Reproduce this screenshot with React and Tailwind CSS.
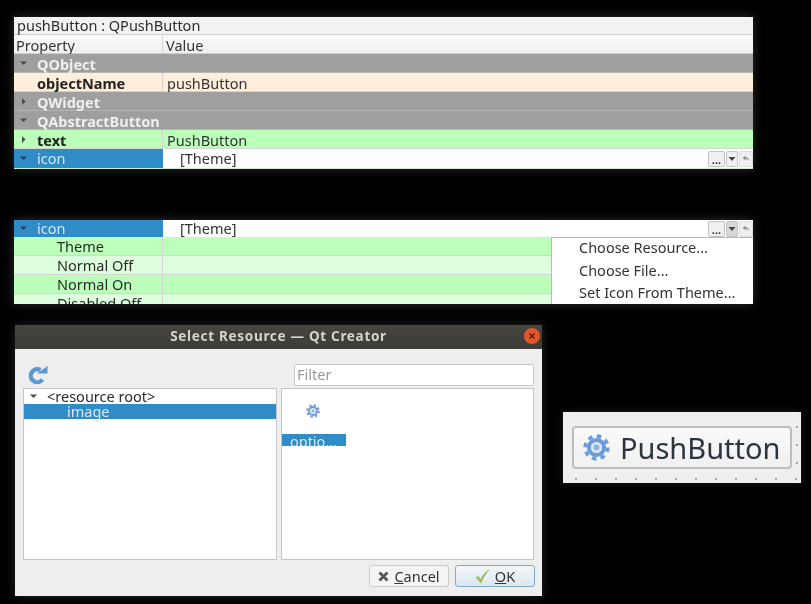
const font = 'font-["Noto_Sans",sans-serif]';

function Caret({ open, light }) {
  return (
    <svg width="9" height="9" viewBox="0 0 9 9" className="shrink-0">
      {open ? (
        <path d="M1 2.500h7L4.500 6z" fill={light ? '#1f3f5c' : '#4a4a4a'} />
      ) : (
        <path d="M3 1v7L6.500 4.500z" fill="#4a4a4a" />
      )}
    </svg>
  );
}

function Gear({ size }) {
  return (
    <svg width={size} height={size} viewBox="0 0 24 24">
      <circle cx="12" cy="12" r="10" fill="none" stroke="#6b9bd8" strokeWidth="3.400" strokeDasharray="3.930 3.930" />
      <circle cx="12" cy="12" r="6.700" fill="none" stroke="#6b9bd8" strokeWidth="3.600" />
      <circle cx="12" cy="12" r="4.800" fill="#dbe6f4" />
      <circle cx="12" cy="12" r="2.600" fill="#8fb3e0" />
    </svg>
  );
}

function Section({ name, open }) {
  return (
    <div className="h-[19px] flex items-center bg-[#9f9f9f] border-b border-[#b5b5b5] pl-[5px] shrink-0">
      <Caret open={open} />
      <span className="ml-[9px] pt-[2px] text-[14.500px] font-bold text-[#efefef] leading-none">{name}</span>
    </div>
  );
}

function Row({ name, bold, caret, bg, value }) {
  return (
    <div className={`h-[19px] flex shrink-0 border-b border-[#d4d4d4] ${bg}`}>
      <div className="w-[149px] shrink-0 flex items-center pl-[5px] border-r border-[#d4d4d4]">
        <span className="w-[9px] shrink-0">{caret && <Caret />}</span>
        <span className={`ml-[9px] pt-[2px] text-[14.500px] leading-none text-[#222] ${bold ? 'font-bold' : ''}`}>{name}</span>
      </div>
      <div className="flex-1 flex items-center pl-[4px] pt-[2px] text-[14.500px] leading-none text-[#333]">{value}</div>
    </div>
  );
}

function IconRow({ pressed, tall }) {
  return (
    <div className={`flex shrink-0 bg-white ${tall ? 'h-[19px]' : 'h-[17px]'}`}>
      <div className="w-[149px] shrink-0 flex items-center pl-[5px] bg-[#308cc6]">
        <Caret open light />
        <span className="ml-[9px] text-[14.500px] leading-none text-[#d6e8f4]">icon</span>
      </div>
      <div className={`flex-1 flex items-center pl-[17px] text-[14.500px] leading-none text-[#333] ${tall ? '' : 'pb-px'}`}>[Theme]</div>
      <div className="flex items-center gap-px">
        <div className="w-[17px] h-[16px] border border-[#c4c4c4] rounded-[2px] bg-[#f0f0f0] flex items-end justify-center text-[11px] font-bold leading-[13px] text-[#333]">...</div>
        <div className={`w-[12px] h-[16px] border border-[#c4c4c4] rounded-[2px] flex items-center justify-center ${pressed ? 'bg-[#d8d8d8]' : 'bg-[#f0f0f0]'}`}>
          <svg width="8" height="6" viewBox="0 0 8 6"><path d="M0.500 1h7L4 5z" fill="#444" /></svg>
        </div>
        <div className="w-[14px] h-[16px] border border-[#dedede] rounded-[2px] bg-[#f0f0f0] flex items-center justify-center">
          <svg width="8" height="7" viewBox="0 0 8 7"><path d="M3.500 0.500L0.500 3l3 2.500V4c1.500 0 2.600.4 3.600 2C7 3.600 5.500 2 3.500 2z" fill="#999" /></svg>
        </div>
      </div>
    </div>
  );
}

function Panel1() {
  return (
    <div className="absolute left-[14px] top-[17px] w-[739px] h-[152px] flex flex-col bg-white overflow-hidden shadow-[0_0_10px_rgba(255,255,255,0.18)]">
      <div className="h-[18px] shrink-0 flex items-center pl-[3px] bg-[#f2f2f2] border-b border-[#d0d0d0] text-[14.500px] leading-none text-[#2c2c2c]">pushButton : QPushButton</div>
      <div className="h-[19px] shrink-0 flex items-center bg-gradient-to-b from-[#fafafa] to-[#efefef] border-b border-[#cfcfcf] text-[14.500px] leading-none text-[#333]">
        <div className="w-[149px] h-full flex items-center pl-[2px] pt-[2px] border-r border-[#d8d8d8]">Property</div>
        <div className="pl-[3px] pt-[2px]">Value</div>
      </div>
      <Section name="QObject" open />
      <Row name="objectName" bold bg="bg-[#ffeedb]" value="pushButton" />
      <Section name="QWidget" />
      <Section name="QAbstractButton" open />
      <Row name="text" bold caret bg="bg-[#bbffbb]" value="PushButton" />
      <IconRow tall />
      <div className="h-px shrink-0 bg-[#cfe8cf]" />
    </div>
  );
}

function SubRow({ name, bg }) {
  return (
    <div className={`h-[19px] flex shrink-0 border-b border-[#d4d4d4] ${bg}`}>
      <div className="w-[149px] shrink-0 flex items-center pl-[43px] pt-px border-r border-[#d4d4d4] text-[14.500px] leading-none text-[#2a2a2a]">{name}</div>
    </div>
  );
}

function Panel2() {
  return (
    <div className="absolute left-[14px] top-[220px] w-[739px] h-[84px] flex flex-col bg-white overflow-hidden shadow-[0_0_10px_rgba(255,255,255,0.18)]">
      <IconRow pressed />
      <SubRow name="Theme" bg="bg-[#bbffbb]" />
      <SubRow name="Normal Off" bg="bg-[#ddffdd]" />
      <SubRow name="Normal On" bg="bg-[#bbffbb]" />
      <SubRow name="Disabled Off" bg="bg-[#ddffdd]" />
      {/* Menu */}
      <div className="absolute left-[537px] top-[17px] w-[202px] h-[67px] bg-white border-l border-t border-[#b8b8b8] overflow-hidden pl-[27px] text-[14.500px] leading-[22.500px] text-[#333]">
        <div className="-mt-[2px]">Choose Resource...</div>
        <div>Choose File...</div>
        <div>Set Icon From Theme...</div>
      </div>
    </div>
  );
}

function Dialog() {
  return (
    <div className="absolute left-[15px] top-[325px] w-[527px] h-[271px] flex flex-col bg-[#eeeeee] overflow-hidden shadow-[0_0_10px_rgba(255,255,255,0.14)]">
      {/* Title bar */}
      <div className="h-[24px] shrink-0 flex items-center justify-center relative bg-gradient-to-b from-[#48453e] to-[#3c3b37] text-[13.500px] font-bold tracking-[0.7px] text-[#d6d3cb] leading-none">
        Select Resource — Qt Creator
        <div className="absolute right-[2px] top-[3px] w-[16px] h-[16px] rounded-full bg-[#e2562a] flex items-center justify-center">
          <svg width="8" height="8" viewBox="0 0 8 8"><path d="M1.500 1.500l5 5M6.500 1.500l-5 5" stroke="#5b2413" strokeWidth="1.500" /></svg>
        </div>
      </div>
      <div className="flex-1 flex flex-col pl-[8px] pr-[8px] pt-[13px] min-h-0">
        {/* Tool row */}
        <div className="h-[26px] shrink-0 flex items-center">
          <div className="w-[271px] pl-[4px] shrink-0">
            <svg width="21" height="21" viewBox="0 0 21 21">
              <path d="M15.500 14.500A6.500 6.500 0 1 1 13.500 5" fill="none" stroke="#5f97d2" strokeWidth="4.400" />
              <path d="M10 8.500h10.500V1z" fill="#5f97d2" />
            </svg>
          </div>
          <div className="w-[240px] h-[22px] bg-white border border-[#c8c8c8] rounded-[2px] flex items-center pl-[2px] pb-[2px] text-[14.500px] leading-none text-[#9a9a9a]">Filter</div>
        </div>
        {/* Panes */}
        <div className="flex gap-[4px] h-[172px] shrink-0">
          <div className="w-[254px] bg-white border border-[#c6c6c6] flex flex-col">
            <div className="h-[15px] flex items-center pl-[5px]">
              <Caret open />
              <span className="ml-[9px] text-[14.500px] leading-none text-[#2a2a2a]">&lt;resource root&gt;</span>
            </div>
            <div className="h-[15px] flex items-center pl-[43px] bg-[#308cc6] text-[14.500px] leading-none text-[#d6e8f4]">image</div>
          </div>
          <div className="w-[254px] bg-white border border-[#c6c6c6] flex flex-col">
            <div className="pl-[24px] pt-[15px]"><Gear size={14} /></div>
            <div className="mt-[16px] w-[64px] h-[12px] bg-[#308cc6] text-[14.500px] leading-[14px] text-[#d6e8f4] text-center overflow-hidden">optio...</div>
          </div>
        </div>
        {/* Buttons */}
        <div className="flex justify-end gap-[6px] mt-[5px] -mr-px">
          <div className="w-[80px] h-[22px] rounded-[3px] border border-[#cccccc] bg-[#f4f4f4] flex items-center justify-center gap-[5px] text-[14.500px] leading-none text-[#333]">
            <svg width="11" height="11" viewBox="0 0 11 11"><path d="M1.500 1.500l8 8M9.500 1.500l-8 8" stroke="#555" strokeWidth="2.800" /></svg>
            <span><span className="underline">C</span>ancel</span>
          </div>
          <div className="w-[80px] h-[22px] rounded-[3px] border border-[#7eaccb] bg-gradient-to-b from-[#f2f6f9] to-[#dde7ef] flex items-center justify-center gap-[5px] text-[14.500px] leading-none text-[#333]">
            <svg width="15" height="15" viewBox="0 0 15 15"><path d="M1 8.500l2.500-1 2 3.500C7.500 6.500 10 3 14 1 10.500 4.500 8 9 6 14z" fill="#9bc84a" stroke="#7fa83a" strokeWidth="0.500" /></svg>
            <span><span className="underline">O</span>K</span>
          </div>
        </div>
      </div>
    </div>
  );
}

function PushPreview() {
  const xs = Array.from({ length: 12 }, (_, i) => i);
  return (
    <div className="absolute left-[563px] top-[412px] w-[238px] h-[71px] bg-[#efefef] shadow-[0_0_8px_rgba(255,255,255,0.12)] flex">
      <div className="w-[233px] shrink-0 flex flex-col">
        <div className="ml-[9px] mt-[14px] w-[220px] h-[43px] rounded-[4px] border-2 border-[#bdbdbd] bg-gradient-to-b from-[#fafafa] to-[#f0f0f0] flex items-center pl-[9px]">
          <Gear size={27} />
          <span className="ml-[10px] text-[29px] leading-none whitespace-nowrap text-[#2b3540]">PushButton</span>
        </div>
        <div className="mt-[9px] pl-[12px] flex gap-[18px]">
          {xs.map(i => <span key={i} className="w-[2px] h-[2px] shrink-0 bg-[#a4a4a4]" />)}
        </div>
      </div>
      {/* Designer grid dots on the right edge */}
      <div className="flex flex-col gap-[16px] pt-[14px]">
        <span className="w-[2px] h-[2px] bg-[#a4a4a4]" />
        <span className="w-[2px] h-[2px] bg-[#a4a4a4]" />
        <span className="w-[2px] h-[2px] bg-[#a4a4a4]" />
      </div>
    </div>
  );
}

export default function App() {
  return (
    <div className={`relative w-[811px] h-[604px] bg-black overflow-hidden blur-[0.4px] ${font}`}>
      <Panel1 />
      <Panel2 />
      <Dialog />
      <PushPreview />
    </div>
  );
}
